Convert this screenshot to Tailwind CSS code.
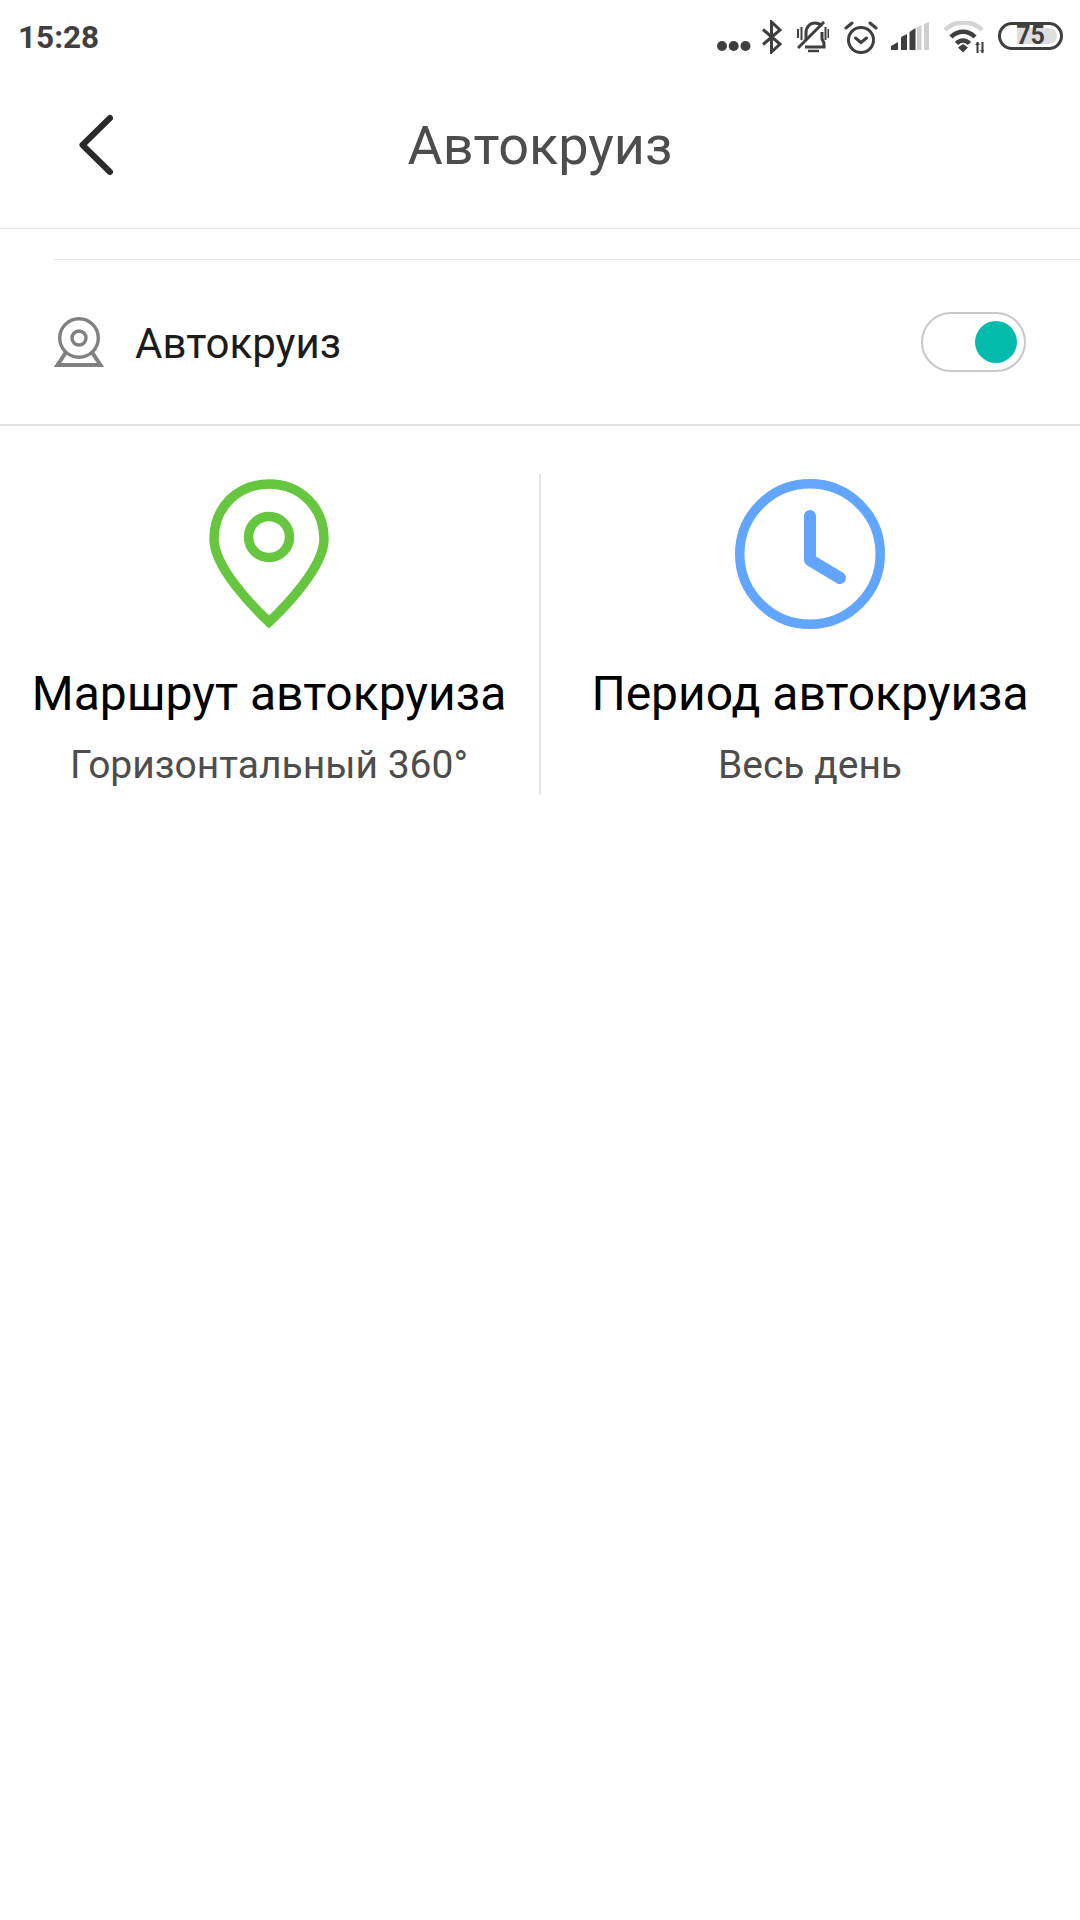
<!DOCTYPE html>
<html lang="ru">
<head>
<meta charset="utf-8">
<script src="https://cdn.jsdelivr.net/npm/@tailwindcss/browser@4"></script>
</head>
<body class="bg-white">
<div class="w-[1080px] h-[1920px] bg-white font-['Roboto',sans-serif] flex flex-col overflow-hidden">
  <!-- status bar -->
  <div class="h-[72px] flex items-center justify-between pl-[18px] pr-[17px] pt-[2px]">
    <span class="text-[31.500px] font-bold text-[#3f3f3f] leading-none mt-[1px]">15:28</span>
    <div class="flex items-center h-[70px]">
      <svg class="w-[34px] h-[12px] mt-[18px] mr-[11px]" viewBox="0 0 34 12" fill="#3f3f3f"><circle cx="5" cy="6" r="5"/><circle cx="16.700" cy="6" r="5"/><circle cx="28.500" cy="6" r="5"/></svg>
      <svg class="w-[20px] h-[34px] mr-[15px]" viewBox="0 0 20 34" fill="none" stroke="#3f3f3f" stroke-width="3"><path d="M1 9.500 18 24 9.500 32V2l8.500 8L1 24.500"/></svg>
      <svg class="w-[32px] h-[32px] mr-[15px]" viewBox="0 0 32 32" fill="none" stroke="#3f3f3f" stroke-width="3"><path d="M9 19v-7c0-6 4-10 9-10 3 0 5 1 7 3M25 11v7l2 4v4H8"/><path d="M1 27 27 1"/><path d="M11 30h11" stroke-width="2.500"/><path d="M1 8v9M4.500 6v13M28.500 6v13M31.500 8v9" stroke-width="2"/></svg>
      <svg class="w-[34px] h-[34px] mr-[13px]" viewBox="0 0 34 34" fill="none" stroke="#3f3f3f" stroke-width="3"><circle cx="17" cy="20" r="12.500"/><path d="M11.500 18 17 22.500l5.500-4.500M2 8l6-5M32 8l-6-5" stroke-linecap="round"/></svg>
      <svg class="w-[38px] h-[28px] mr-[15px] mb-[3px]" viewBox="0 0 38 28"><path d="M0 28v-4l7-4v8zM10 28V15l6-3v16zM18.500 28V10l6-4v22z" fill="#3f3f3f"/><path d="M26 28V5l4.500-2v25zM33 28V2l5-2v28z" fill="#cfcfcf"/></svg>
      <svg class="w-[40px] h-[32px] mr-[14px]" viewBox="0 0 40 32" fill="none"><path d="M1 9C11-1 28-1 38 9" stroke="#d4d4d4" stroke-width="4.500"/><path d="M7 16c7-7 17-7 24 0" stroke="#3f3f3f" stroke-width="4.500"/><path d="M12.500 22.500c4-4 9-4 13 0" stroke="#3f3f3f" stroke-width="4.500"/><path d="m14 26.500 5-3.500 5 3.500-5 5z" fill="#3f3f3f"/><path d="M33.500 21v11M38.500 21v11" stroke="#3f3f3f" stroke-width="2"/><path d="m31 24 2.500-3 2.500 3zM36 29l2.500 3 1.500-3z" fill="#3f3f3f"/></svg>
      <div class="relative w-[65px] h-[28px] mb-[3px] border-[3px] border-[#3f3f3f] rounded-full flex items-center justify-center">
        <div class="absolute left-[16px] right-[3px] top-[3px] bottom-[3px] bg-[#dedede] rounded-r-full"></div>
        <span class="relative text-[25px] font-bold text-[#3f3f3f] leading-[22px]">75</span>
      </div>
    </div>
  </div>
  <!-- title bar -->
  <div class="relative h-[157px] border-b border-[#e8e8e8] flex items-center justify-center pb-[8px]">
    <svg class="absolute left-[76px] top-[40px] w-[40px] h-[66px]" viewBox="0 0 40 66" fill="none" stroke="#2a2a2a" stroke-width="6" stroke-linecap="round" stroke-linejoin="round"><path d="M34 6 6.500 33 34 60"/></svg>
    <h1 class="text-[54px] text-[#4d4d4d] font-normal leading-none">Автокруиз</h1>
  </div>
  <!-- toggle row -->
  <div class="mt-[30px] ml-[54px] border-t border-[#e6e6e6] h-[165px] flex items-center pr-[54px]">
    <svg class="w-[50px] h-[50px]" viewBox="0 0 50 50" fill="none" stroke="#808080" stroke-width="3.400"><circle cx="25" cy="21" r="19.300"/><circle cx="25" cy="21" r="7"/><path d="M11.500 36 3.500 48h43l-8-12" stroke-width="4"/></svg>
    <span class="ml-[31px] mt-[4px] text-[42px] text-[#1c1c1c] leading-none">Автокруиз</span>
    <div class="ml-auto w-[105px] h-[60px] rounded-full border-2 border-[#c8c8c8] flex items-center justify-end pr-[7px]">
      <div class="w-[42px] h-[42px] rounded-full bg-[#03bbad]"></div>
    </div>
  </div>
  <div class="h-[2px] bg-[#e2e2e2]"></div>
  <!-- two panels -->
  <div class="grid grid-cols-[541px_539px] mt-[48px]">
    <div class="h-[321px] border-r-2 border-[#e4e4e4] flex flex-col items-center pr-[1px]">
      <svg class="w-[120px] h-[150px] mt-[5px]" viewBox="0 0 120 150" fill="none" stroke="#67c63f" stroke-width="9.500"><path d="M60 143C44 128 5 88 5 60 5 28 29 5 60 5s55 23 55 55c0 28-39 68-55 83z"/><circle cx="60" cy="58" r="20.500"/></svg>
      <span class="mt-[41px] text-[48px] text-black leading-none">Маршрут автокруиза</span>
      <span class="mt-[28px] text-[39px] text-[#4d4d4d] leading-none">Горизонтальный 360°</span>
    </div>
    <div class="h-[321px] flex flex-col items-center pr-[1px]">
      <svg class="w-[150px] h-[150px] mt-[5px]" viewBox="0 0 150 150" fill="none" stroke="#62a5ff" stroke-width="9.500" stroke-linecap="round" stroke-linejoin="round"><circle cx="75" cy="75" r="70.250"/><path d="M75 37v44l30 18" stroke-width="12"/></svg>
      <span class="mt-[41px] text-[48px] text-black leading-none">Период автокруиза</span>
      <span class="mt-[28px] text-[39px] text-[#4d4d4d] leading-none">Весь день</span>
    </div>
  </div>
</div>
</body>
</html>
